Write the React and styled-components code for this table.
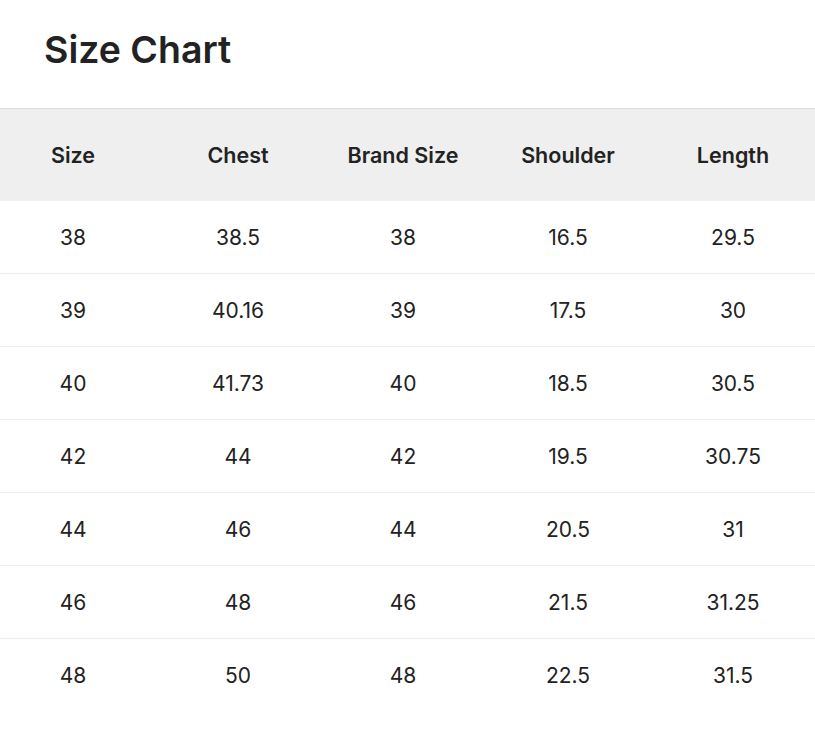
import React from 'react'
import styled, {createGlobalStyle} from 'styled-components'

const GlobalStyle = createGlobalStyle`
  body {
    margin: 0;
    background: #fff;
    font-family: Inter, "Noto Sans", sans-serif;
    color: #222;
    overflow-x: hidden;
  }
`

const headers = ["Size", "Chest", "Brand Size", "Shoulder", "Length"]

const rows = [
    ["38", "38.5", "38", "16.5", "29.5"],
    ["39", "40.16", "39", "17.5", "30"],
    ["40", "41.73", "40", "18.5", "30.5"],
    ["42", "44", "42", "19.5", "30.75"],
    ["44", "46", "44", "20.5", "31"],
    ["46", "48", "46", "21.5", "31.25"],
    ["48", "50", "48", "22.5", "31.5"],
]

const App = () => {
    return (
        <Page>
            <GlobalStyle/>
            <Title>Size Chart</Title>
            <Table>
                <HeadRow>
                    {headers.map(h => <Cell key={h} head>{h}</Cell>)}
                </HeadRow>
                {rows.map((r, i) => (
                    <Row key={i} last={i === rows.length - 1}>
                        {r.map((v, j) => <Cell key={j}>{v}</Cell>)}
                    </Row>
                ))}
            </Table>
        </Page>
    )
}

const Page = styled.div`
  width: 815px;
  overflow: hidden;
`

const Title = styled.h1`
  margin: 0;
  padding: 26px 0 0 44px;
  height: 108px;
  box-sizing: border-box;
  font-size: 37.5px;
  font-weight: 600;
  line-height: 48px;
  color: #222;
`

const Table = styled.div`
  width: 825px;
  border-top: 1px solid #dcdcdc;
`

const HeadRow = styled.div`
  display: grid;
  grid-template-columns: repeat(5, 165px);
  height: 92px;
  background: #efefef;
`

const Row = styled.div`
  display: grid;
  grid-template-columns: repeat(5, 165px);
  height: 73px;
  box-sizing: border-box;
  border-bottom: ${p => p.last ? 'none' : '1px solid #ececec'};
`

const Cell = styled.div`
  display: flex;
  align-items: center;
  justify-content: center;
  padding-right: 19px;
  font-size: ${p => p.head ? '21.5px' : '21px'};
  font-weight: ${p => p.head ? 600 : 400};
  color: #222;
`

export default App
